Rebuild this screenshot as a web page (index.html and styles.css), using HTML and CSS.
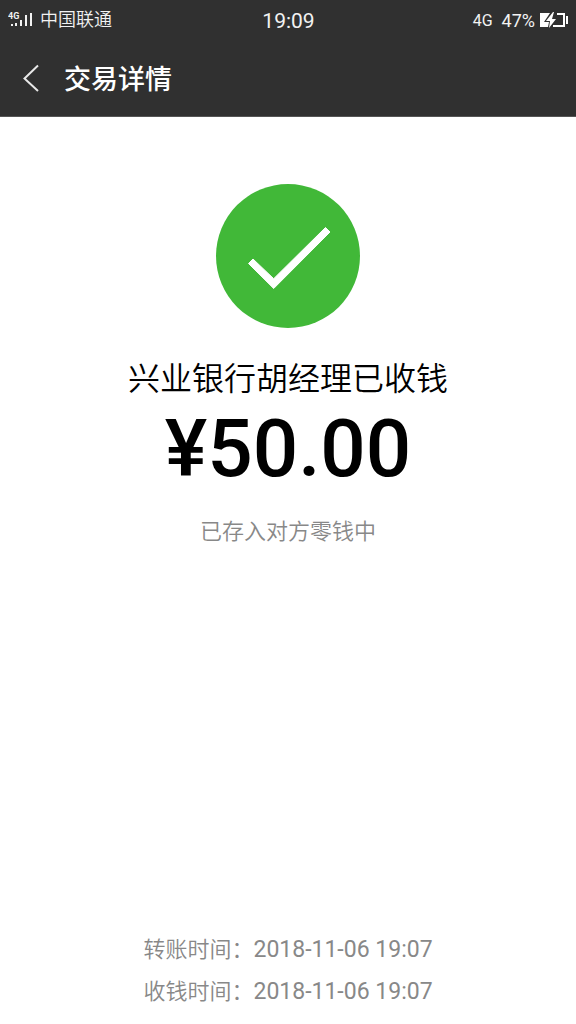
FILE: index.html
```html
<!DOCTYPE html>
<html lang="zh-CN">
<head>
<meta charset="utf-8">
<meta name="viewport" content="width=device-width, initial-scale=1">
<title>交易详情</title>
<link rel="stylesheet" href="styles.css">
</head>
<body>
<div class="screen">
  <header class="top">
    <div class="status">
      <div class="carrier">
        <svg class="signal" viewBox="0 0 25 18" aria-hidden="true">
          <text class="signal-label" x="0" y="8">4G</text>
          <path fill="#f2f2f2" d="M3 13h2v2H3zM7 12h2v3H7zM12 9h2v6h-2zM17 4h2v11h-2zM22 2h2v13h-2z"/>
        </svg>
        <span>中国联通</span>
      </div>
      <time class="clock">19:09</time>
      <div class="power">
        <span class="network">4G</span>
        <span class="percent">47%</span>
        <svg class="battery" viewBox="0 0 29 18" aria-hidden="true">
          <path fill="#fff" d="M0 2h10L4 11h5l-1 5H0z"/>
          <path fill="#fff" d="M13 1L6 10h4l-1 7 7-9h-4l2-7z"/>
          <path fill="none" stroke="#fff" stroke-width="2" d="M17 3h7v12H13"/>
          <path fill="#fff" d="M26 5h2v8h-2z"/>
        </svg>
      </div>
    </div>
    <nav class="nav">
      <button class="back" type="button" aria-label="返回">
        <svg viewBox="0 0 18 28" aria-hidden="true"><path fill="none" stroke="#e8e8e8" stroke-width="2" d="M15 1.500L1.500 14.500l13.500 12.500"/></svg>
      </button>
      <h1 class="title">交易详情</h1>
    </nav>
  </header>
  <main class="result">
    <svg class="check" viewBox="0 0 144 144" aria-hidden="true">
      <circle cx="72" cy="72" r="72" fill="#41b838"/>
      <path fill="#fff" stroke="#fff" stroke-width="1" stroke-linejoin="round" d="M37 75L32.500 79.500 57.700 104.500 114 48 109.500 43.500 57.700 94.700z"/>
    </svg>
    <p class="receiver">兴业银行胡经理已收钱</p>
    <p class="amount">¥50.00</p>
    <p class="note">已存入对方零钱中</p>
  </main>
  <footer class="times">
    <p>转账时间：<time>2018-11-06 19:07</time></p>
    <p>收钱时间：<time>2018-11-06 19:07</time></p>
  </footer>
</div>
</body>
</html>
```
FILE: styles.css
```css
* {
  box-sizing: border-box;
}

body {
  margin: 0;
  background: #fff;
  color: #000;
  font-family: Roboto, "Noto Sans CJK SC", sans-serif;
}

h1,
p {
  margin: 0;
}

svg {
  display: block;
}

.screen {
  min-height: 100vh;
  display: flex;
  flex-direction: column;
}

.top {
  background: #303030;
  color: #fff;
  border-bottom: 1px solid #555;
}

.status {
  display: grid;
  grid-template-columns: 1fr auto 1fr;
  align-items: center;
  height: 40px;
  padding: 0 7px 0 8px;
  color: #f2f2f2;
}

.carrier {
  display: flex;
  align-items: center;
  gap: 7px;
  font-size: 18px;
  font-weight: 350;
  line-height: 22px;
}

.signal {
  width: 25px;
  height: 18px;
}

.signal-label {
  fill: #f2f2f2;
  font-size: 9px;
  font-weight: 700;
}

.clock {
  padding-top: 2px;
  font-size: 21px;
}

.power {
  display: flex;
  align-items: center;
  justify-content: flex-end;
}

.network {
  margin-right: 9px;
  font-size: 16px;
}

.percent {
  margin-right: 5px;
  font-size: 18px;
}

.battery {
  width: 29px;
  height: 18px;
}

.nav {
  display: flex;
  align-items: center;
  height: 76px;
  padding-left: 16px;
}

.back {
  width: 32px;
  height: 48px;
  margin-right: 16px;
  padding: 0 7px;
  border: 0;
  background: none;
}

.back svg {
  width: 18px;
  height: 28px;
}

.title {
  padding-top: 4px;
  font-size: 27px;
  font-weight: 500;
  line-height: 40px;
}

.result {
  flex: 1;
  display: flex;
  flex-direction: column;
  align-items: center;
  padding: 67px 16px 32px;
  text-align: center;
}

.check {
  width: 144px;
  height: 144px;
}

.receiver {
  margin-top: 28px;
  font-size: 32px;
  font-weight: 350;
  line-height: 46px;
}

.amount {
  margin-top: 3px;
  font-size: 80px;
  font-weight: 500;
  line-height: 88px;
}

.note {
  margin-top: 23px;
  color: #888;
  font-size: 22px;
  font-weight: 350;
  line-height: 32px;
}

.times {
  padding: 0 16px 11px;
  color: #888;
  font-size: 22px;
  font-weight: 350;
  line-height: 42px;
  text-align: center;
}

.times time {
  font-size: 23px;
  font-weight: 400;
}
```
